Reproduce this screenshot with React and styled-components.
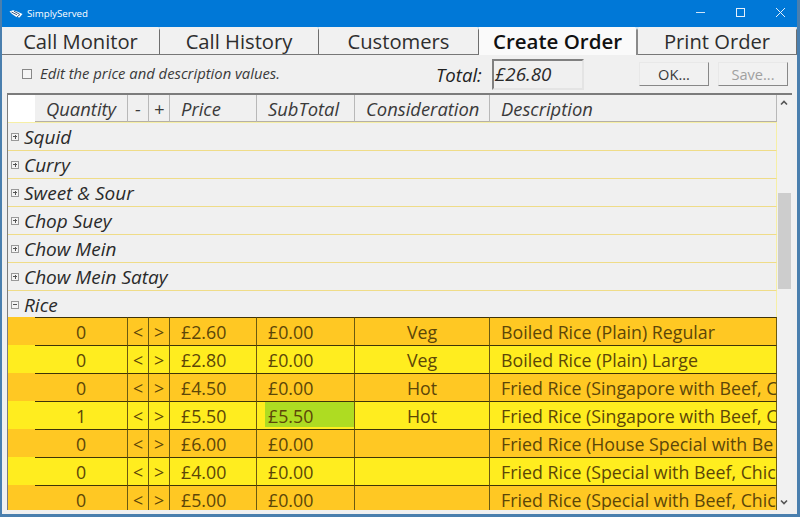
import React from "react";
import styled, { createGlobalStyle } from "styled-components";

const Global = createGlobalStyle`
  html, body { margin: 0; padding: 0; background: #f0f0f0; }
  * { box-sizing: border-box; }
`;
const FONT = `"Open Sans", "Noto Sans", "Liberation Sans", sans-serif`;
const COLS = "27px 93px 21px 21px 87px 98px 135px 287px";

const Win = styled.div`
  width: 800px; height: 517px; overflow: hidden; display: flex; flex-direction: column;
  background: #f0f0f0; font-family: ${FONT}; color: #1c1c1c;
  border: solid #4a7fae; border-width: 0 3px 3px 2px;
`;
const TitleBar = styled.div`
  height: 27px; flex: none; margin: 0 -3px 0 -2px; padding-left: 9px; display: flex; align-items: center;
  background: #0078d7; color: #fff; font-size: 9.7px;
`;
const Logo = styled.svg` width: 14px; height: 8px; margin-right: 4px; `;
const WinButtons = styled.div` margin-left: auto; display: flex; `;
const WinButton = styled.div`
  width: 40px; height: 27px; padding-bottom: 2px; display: flex; align-items: center; justify-content: center;
`;
const Tabs = styled.div`
  height: 28px; flex: none; display: grid; grid-template-columns: 158px 159px 160px 159px 159px;
  grid-template-rows: 27px; border-bottom: 1px solid #777;
`;
const Tab = styled.div`
  position: relative; display: flex; align-items: center; justify-content: center;
  font-size: ${p => p.$active ? "20.5px" : "20.2px"};
  font-weight: ${p => p.$active ? 600 : 400}; color: ${p => p.$active ? "#111" : "#2e2e2e"};
  background: ${p => p.$active ? "#fafafa" : "#f1f1f1"};
  border-right: ${p => p.$active ? "2px solid #8a8a8a" : "1px solid #6e6e6e"};
  ${p => p.$active && "height: 28px; z-index: 1;"}
  &::after {
    content: ""; position: absolute; right: -3px; top: 0; width: 0; height: 0;
    border: solid transparent; border-width: 3px 2.5px 0; border-top-color: #cfe3f2;
  }
`;
const Toolbar = styled.div`
  height: 38px; flex: none; display: flex; align-items: center; padding-left: 20px;
`;
const Check = styled.span`
  width: 10px; height: 10px; border: 1px solid #888; background: #f5f5f5; margin-right: 8px;
`;
const Note = styled.span` font-style: italic; font-size: 14.8px; color: #3a3a3a; width: 396px; margin-top: -2px; `;
const TotalLabel = styled.span` font-style: italic; font-size: 18.6px; width: 56px; color: #222; `;
const TotalBox = styled.div`
  width: 92px; height: 31px; border: 2px solid; border-color: #808080 #e4e4e4 #e4e4e4 #808080; margin-right: 55px;
  font-style: italic; font-size: 18.8px; padding-left: 1px; display: flex; align-items: center; color: #2a2a2a;
`;
const Btn = styled.div`
  width: 70px; height: 24px; margin-right: 9px; display: flex; align-items: center; justify-content: center;
  font-size: 14.6px; color: ${p => p.$off ? "#a0a0a0" : "#3a3a3a"}; background: #f1f1f1;
  border: 1px solid; border-color: #e8e8e8 #888 #888 #e8e8e8;
`;
const GridFrame = styled.div`
  margin: 0 5px 4px 5px; flex: 1; min-height: 0; display: flex; overflow: hidden;
  border-top: 2px solid #7c7c7c; border-left: 1px solid #7c7c7c; background: #f4f4f4;
`;
const Sheet = styled.div` width: 769px; flex: none; overflow: hidden; `;
const Row = styled.div`
  display: grid; grid-template-columns: ${COLS}; height: 28px;
`;
const HeadRow = styled(Row)`
  background: #f0f0f0; border-bottom: 1px solid #f6efa6;
`;
const HeadCell = styled.div`
  display: flex; align-items: center; justify-content: ${p => p.$center ? "center" : "flex-start"};
  padding-left: ${p => p.$center ? 0 : "11px"}; font-style: italic; font-size: 18.4px; color: #3a3a3a;
  border-right: ${p => p.$blank ? "0" : "1px solid #b8b8b8"}; border-bottom: ${p => p.$blank ? "0" : "1px solid #b5b0a5"};
  background: ${p => p.$blank ? "#fff" : "#f0f0f0"};
`;
const GroupRow = styled.div`
  height: 28px; display: flex; align-items: center; background: #f0f0f0; padding: 0 0 0 3px;
  border-bottom: 1px solid #efdc88; border-right: 1px solid #f6efa6;
  font-style: italic; font-size: 19px; color: #2a2a2a;
  ${p => p.$open && "height: 26px; border-bottom: 0; padding-top: 1px;"}
`;
const Expander = styled.span`
  width: 8px; height: 8px; margin-right: 5px; position: relative; flex: none; border: 1px solid #999; background: #f4f4f4;
  &::before { content: ""; position: absolute; left: 1px; right: 1px; top: 2.5px; height: 1px; background: #555; }
  ${p => !p.$open && `&::after { content: ""; position: absolute; top: 1px; bottom: 1px; left: 2.5px; width: 1px; background: #555; }`}
`;
const Cell = styled.div`
  display: flex; align-items: center; overflow: hidden; white-space: nowrap;
  justify-content: ${p => p.$center ? "center" : "flex-start"};
  padding-left: ${p => p.$center ? 0 : "11px"};
  background: ${p => p.$bg}; color: #5c4608; font-size: 17.8px;
  border-right: 1px solid #6b5a10; border-top: 1px solid #3f3308;
`;
const Gutter = styled.div` background: ${p => p.$bg}; `;
const Sub = styled(Cell)`
  padding: 0 0 2px 8px;
`;
const SubFill = styled.span`
  flex: 1; align-self: stretch; display: flex; align-items: center; padding: 2px 0 0 3px;
  background: ${p => p.$hot ? "#aedc22" : "transparent"};
`;
const Scroll = styled.div` flex: 1; display: flex; flex-direction: column; align-items: center; background: #f1f1f1; `;
const Arrow = styled.svg` width: 15px; height: 16px; flex: none; margin-top: ${p => p.$mt || 0}px; `;
const Thumb = styled.div` width: 13px; height: 96px; margin-top: 82px; background: #cdcdcd; `;

const groups = ["Squid", "Curry", "Sweet & Sour", "Chop Suey", "Chow Mein", "Chow Mein Satay"];
const items = [
  ["0", "£2.60", "£0.00", "Veg", "Boiled Rice (Plain) Regular"],
  ["0", "£2.80", "£0.00", "Veg", "Boiled Rice (Plain) Large"],
  ["0", "£4.50", "£0.00", "Hot", "Fried Rice (Singapore with Beef, C"],
  ["1", "£5.50", "£5.50", "Hot", "Fried Rice (Singapore with Beef, C"],
  ["0", "£6.00", "£0.00", "", "Fried Rice (House Special with Be"],
  ["0", "£4.00", "£0.00", "", "Fried Rice (Special with Beef, Chic"],
  ["0", "£5.00", "£0.00", "", "Fried Rice (Special with Beef, Chic"],
];

export default function App() {
  return (
    <Win>
      <Global />
      <TitleBar>
        <Logo viewBox="0 0 14 8">
          <path d="M0.5 1.5 L4 0.3 L8 1.5 L13.5 4 L10.5 7.5 L7 6.8 L3 4 Z" fill="#fff" />
          <path d="M2.5 2 L8 4.8 M5 1.2 L10.5 4.2 M8 6.8 L11 4.5" stroke="#274b78" strokeWidth="0.9" fill="none" />
        </Logo>
        SimplyServed
        <WinButtons>
          <WinButton><svg width="9" height="9"><path d="M0 4.5H9" stroke="#cfe4f7" strokeWidth="1" /></svg></WinButton>
          <WinButton><svg width="9" height="9"><rect x="0.5" y="0.5" width="8" height="8" fill="none" stroke="#e6f0fa" /></svg></WinButton>
          <WinButton><svg width="9" height="9"><path d="M0 0L9 9M9 0L0 9" stroke="#e6f0fa" /></svg></WinButton>
        </WinButtons>
      </TitleBar>
      <Tabs>
        <Tab>Call Monitor</Tab>
        <Tab>Call History</Tab>
        <Tab>Customers</Tab>
        <Tab $active>Create Order</Tab>
        <Tab>Print Order</Tab>
      </Tabs>
      <Toolbar>
        <Check />
        <Note>Edit the price and description values.</Note>
        <TotalLabel>Total:</TotalLabel>
        <TotalBox>£26.80</TotalBox>
        <Btn>OK...</Btn>
        <Btn $off>Save...</Btn>
      </Toolbar>
      <GridFrame>
        <Sheet>
          <HeadRow>
            <HeadCell $blank />
            <HeadCell>Quantity</HeadCell>
            <HeadCell $center>-</HeadCell>
            <HeadCell $center>+</HeadCell>
            <HeadCell>Price</HeadCell>
            <HeadCell>SubTotal</HeadCell>
            <HeadCell>Consideration</HeadCell>
            <HeadCell>Description</HeadCell>
          </HeadRow>
          {groups.map(g => <GroupRow key={g}><Expander />{g}</GroupRow>)}
          <GroupRow $open><Expander $open />Rice</GroupRow>
          {items.map((it, i) => {
            const bg = i % 2 ? "#ffed1f" : "#ffc823";
            return (
              <Row key={i}>
                <Gutter $bg={bg} />
                <Cell $bg={bg} $center>{it[0]}</Cell>
                <Cell $bg={bg} $center>&lt;</Cell>
                <Cell $bg={bg} $center>&gt;</Cell>
                <Cell $bg={bg}>{it[1]}</Cell>
                <Sub $bg={bg}><SubFill $hot={it[0] === "1"}>{it[2]}</SubFill></Sub>
                <Cell $bg={bg} $center>{it[3]}</Cell>
                <Cell $bg={bg}>{it[4]}</Cell>
              </Row>
            );
          })}
        </Sheet>
        <Scroll>
          <Arrow viewBox="0 0 15 16"><path d="M4 9.5 L7 6.5 L10 9.5" fill="none" stroke="#555" strokeWidth="1.6" /></Arrow>
          <Thumb />
          <Arrow viewBox="0 0 15 16" $mt={205}><path d="M4 6.5 L7 9.5 L10 6.5" fill="none" stroke="#555" strokeWidth="1.6" /></Arrow>
        </Scroll>
      </GridFrame>
    </Win>
  );
}
